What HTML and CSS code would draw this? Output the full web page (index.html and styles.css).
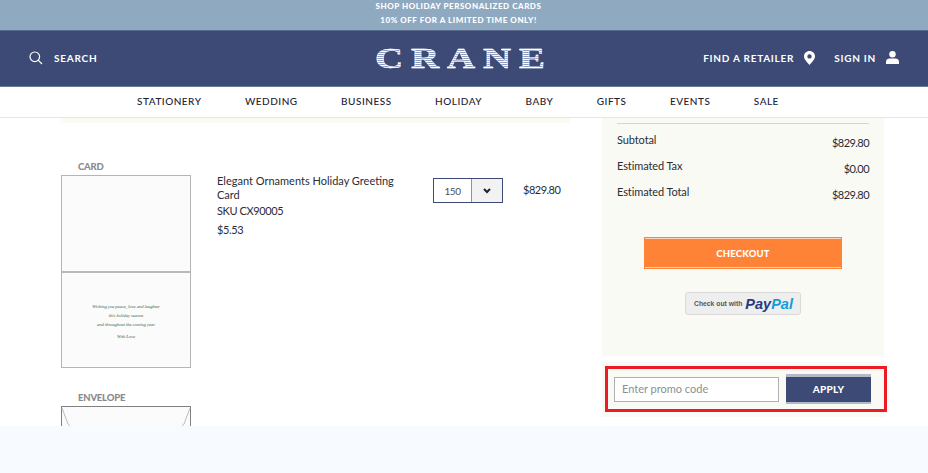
FILE: index.html
```html
<!DOCTYPE html>
<html lang="en">
<head>
  <meta charset="UTF-8" />
  <meta name="viewport" content="width=device-width, initial-scale=1.0" />
  <title>Shopping Cart - Crane</title>
  <link rel="stylesheet" href="styles.css">
</head>
<body>
  <div class="promo-bar">
    <p>SHOP HOLIDAY PERSONALIZED CARDS</p>
    <p>10% OFF FOR A LIMITED TIME ONLY!</p>
  </div>

  <header class="site-header">
    <a class="search-link" href="#">
      <svg class="icon-search" width="14" height="14" viewBox="0 0 14 14" fill="none" stroke="#fff" stroke-width="1.2">
        <circle cx="5.8" cy="5.8" r="4.8" />
        <path d="M9.2 9.2 13 13" />
      </svg>
      <span>SEARCH</span>
    </a>
    <a class="logo" href="#">CRANE</a>
    <div class="account-links">
      <a class="retailer-link" href="#">
        <span>FIND A RETAILER</span>
        <svg width="11" height="14" viewBox="0 0 11 14">
          <path fill="#fff" fill-rule="evenodd" d="M5.5 0C2.4 0 0 2.4 0 5.3 0 8.6 3.4 11.4 5.5 14 7.6 11.4 11 8.6 11 5.3 11 2.4 8.6 0 5.5 0ZM5.5 3.2a2.2 2.2 0 1 1 0 4.4 2.2 2.2 0 0 1 0-4.4Z" />
        </svg>
      </a>
      <a class="signin-link" href="#">
        <span>SIGN IN</span>
        <svg width="13" height="13" viewBox="0 0 13 13">
          <circle fill="#fff" cx="6.5" cy="3.2" r="3.2" />
          <path fill="#fff" d="M0 13V10.6C0 8.6 1.8 7.4 3.6 7.4H9.4C11.2 7.4 13 8.6 13 10.6V13Z" />
        </svg>
      </a>
    </div>
  </header>

  <nav class="main-nav">
    <a href="#">STATIONERY</a>
    <a href="#">WEDDING</a>
    <a href="#">BUSINESS</a>
    <a href="#">HOLIDAY</a>
    <a href="#">BABY</a>
    <a href="#">GIFTS</a>
    <a href="#">EVENTS</a>
    <a href="#">SALE</a>
  </nav>

  <main class="cart">
    <section class="cart-items">
      <div class="cart-strip"></div>
      <div class="cart-item">
        <div class="item-proofs">
          <h4 class="proof-label">CARD</h4>
          <div class="card-proof">
            <div class="card-panel"></div>
            <div class="card-panel card-inside">
              <p>Wishing you peace, love and laughter</p>
              <p>this holiday season</p>
              <p>and throughout the coming year</p>
              <p class="card-sign">With Love</p>
            </div>
          </div>
          <h4 class="proof-label envelope-label">ENVELOPE</h4>
          <div class="envelope-proof">
            <svg width="130" height="22" viewBox="0 0 130 22" fill="none" stroke="#bbb">
              <path d="M1 1 7 17Q8 20 14 21M129 1 123 17Q122 20 116 21" />
            </svg>
          </div>
        </div>
        <div class="item-info">
          <div class="item-name">Elegant Ornaments Holiday Greeting Card</div>
          <div class="item-sku">SKU CX90005</div>
          <div class="item-price">$5.53</div>
        </div>
        <div class="qty-select">
          <span class="qty-value">150</span>
          <span class="qty-arrow">
            <svg width="8" height="6" viewBox="0 0 8 6" fill="none" stroke="#1d2233" stroke-width="2">
              <path d="M1 1 4 4 7 1" />
            </svg>
          </span>
        </div>
        <div class="item-total">$829.80</div>
      </div>
    </section>

    <aside class="cart-side">
      <div class="summary">
        <div class="summary-rows">
          <div class="summary-row"><span>Subtotal</span><span class="amount">$829.80</span></div>
          <div class="summary-row"><span>Estimated Tax</span><span class="amount">$0.00</span></div>
          <div class="summary-row"><span>Estimated Total</span><span class="amount">$829.80</span></div>
        </div>
        <button class="checkout-btn">CHECKOUT</button>
        <button class="paypal-btn">
          <span class="paypal-note">Check out with</span>
          <span class="paypal-name"><b>Pay</b><i>Pal</i></span>
        </button>
      </div>
      <form class="promo-form">
        <input type="text" placeholder="Enter promo code" />
        <button type="button" class="apply-btn">APPLY</button>
        <div class="promo-outline"></div>
      </form>
    </aside>
  </main>

  <footer class="site-footer"></footer>
</body>
</html>
```

FILE: styles.css
```css
* {
  box-sizing: border-box;
}
body {
  font-family: 'Lato', sans-serif;
  background: #fff;
  margin: 0;
  color: #2b2d36;
  height: 473px;
  overflow: hidden;
}
a {
  color: inherit;
  text-decoration: none;
}

/* top bars */
.promo-bar {
  height: 30px;
  background: #8fa9c1;
  color: #fff;
  text-align: center;
  font-size: 8px;
  font-weight: 900;
  letter-spacing: 0.55px;
  padding: 1px 11px 0 0;
}
.promo-bar p {
  margin: 0;
  height: 14px;
  line-height: 11px;
}
.site-header {
  height: 57px;
  background: #3d4a75;
  border-top: 1px solid #5a6d91;
  border-bottom: 1px solid #6d7a99;
  color: #fff;
  display: grid;
  grid-template-columns: 1fr auto 1fr;
  align-items: center;
  padding: 0 29px 2px;
  font-size: 10px;
  font-weight: 700;
  letter-spacing: 0.75px;
}
.search-link {
  display: flex;
  align-items: center;
  gap: 11px;
}
.logo {
  width: 170px;
  font-family: 'Liberation Serif', serif;
  font-size: 30px;
  font-weight: 700;
  line-height: 30px;
  letter-spacing: 6px;
  text-indent: 6px;
  text-align: center;
  white-space: nowrap;
  transform: translateX(-4px) scaleX(1.3);
  background: repeating-linear-gradient(180deg, #fff 0, #fff 1px, #8f9abb 1px, #8f9abb 2px);
  -webkit-background-clip: text;
  background-clip: text;
  color: transparent;
  -webkit-text-stroke: 0.4px #fff;
}
.account-links {
  display: flex;
  justify-content: flex-end;
  align-items: center;
  gap: 19px;
}
.retailer-link,
.signin-link {
  display: flex;
  align-items: center;
  gap: 10px;
}
.main-nav {
  height: 31px;
  background: #fff;
  border-bottom: 1px solid #e6e6df;
  display: flex;
  justify-content: center;
  align-items: center;
  gap: 43.5px;
  padding: 0 12px 3px 0;
  color: #1d2233;
  font-size: 10px;
  font-weight: 500;
  letter-spacing: 0.5px;
}

/* cart body */
.cart {
  height: 308px;
  overflow: hidden;
  display: flex;
  gap: 32px;
  padding-left: 61px;
}
.cart-items {
  width: 509px;
}
.cart-strip {
  height: 5px;
  background: #fbfbf4;
}
.cart-item {
  display: flex;
  align-items: flex-start;
  padding-top: 38px;
}
.item-proofs {
  width: 130px;
  margin-right: 26px;
  flex-shrink: 0;
}
.proof-label {
  margin: 0 0 3px 17px;
  height: 11px;
  line-height: 11px;
  font-size: 9.5px;
  font-weight: 900;
  letter-spacing: -0.2px;
  color: #8a8a8e;
}
.card-proof {
  height: 193px;
  border: 1px solid #b5b5b5;
  background: #fbfbfb;
  display: flex;
  flex-direction: column;
}
.card-panel {
  height: 95px;
}
.card-inside {
  flex: 1;
  border-top: 2px solid #b9b9b9;
  padding-top: 29px;
  text-align: center;
  font-family: 'Liberation Serif', serif;
  font-style: italic;
  font-size: 4.5px;
  line-height: 9px;
  color: #2f5f46;
}
.card-inside p {
  margin: 0;
}
.card-inside .card-sign {
  margin-top: 3px;
}
.envelope-label {
  margin-top: 24px;
}
.envelope-proof {
  height: 40px;
  border: 1px solid #808080;
  border-bottom: none;
  background: #fbfbfb;
}
.envelope-proof svg {
  display: block;
  margin-left: -1px;
}
.item-info {
  width: 190px;
  margin: 13px 26px 0 0;
  flex-shrink: 0;
  font-size: 11px;
  line-height: 14px;
}
.item-sku {
  margin-top: 2px;
  letter-spacing: -0.4px;
}
.item-price {
  margin-top: 5px;
  letter-spacing: -0.4px;
}
.qty-select {
  width: 70px;
  height: 25px;
  border: 1px solid #3d4a75;
  display: flex;
  margin-right: 20px;
  margin-top: 17px;
  flex-shrink: 0;
  font-size: 10px;
}
.qty-value {
  width: 37px;
  text-align: center;
  line-height: 24px;
  letter-spacing: -0.4px;
  color: #4b4e5c;
}
.qty-arrow {
  flex: 1;
  background: #f2f2f2;
  border-left: 1px solid #8b93ad;
  display: flex;
  align-items: center;
  justify-content: center;
}
.item-total {
  font-size: 11px;
  line-height: 14px;
  margin-top: 22px;
  letter-spacing: -0.5px;
}

/* order summary */
.cart-side {
  width: 282px;
}
.summary {
  height: 238px;
  background: #fafaf4;
  padding: 5px 15px 0;
  display: flex;
  flex-direction: column;
  align-items: center;
}
.summary-rows {
  width: 252px;
  border-top: 1px solid #d4d4d4;
  padding-top: 9px;
  height: 114px;
}
.summary-row {
  display: flex;
  justify-content: space-between;
  height: 26px;
  font-size: 11px;
  line-height: 14px;
  letter-spacing: -0.1px;
}
.amount {
  padding-top: 3px;
  letter-spacing: -0.55px;
}
.checkout-btn {
  width: 198px;
  height: 32px;
  background: #ff8336;
  border: 1px solid #ff8336;
  box-shadow: inset 0 1px 0 #ffd3b5, inset 0 -1px 0 #ffd3b5;
  color: #fff;
  font-family: inherit;
  font-size: 9.5px;
  font-weight: 900;
  letter-spacing: 0.2px;
}
.paypal-btn {
  width: 116px;
  height: 23px;
  margin-top: 23px;
  padding: 0 0 0 8px;
  background: #eeeeee;
  border: 1px solid #d9d9d9;
  border-radius: 3px;
  display: flex;
  align-items: center;
  gap: 3px;
  font-family: 'Liberation Sans', sans-serif;
}
.paypal-note {
  font-size: 6.8px;
  font-weight: 700;
  color: #55565c;
  white-space: nowrap;
}
.paypal-name {
  font-size: 14.5px;
  font-weight: 700;
  font-style: italic;
}
.paypal-name b {
  color: #253b80;
}
.paypal-name i {
  color: #179bd7;
}
.promo-form {
  position: relative;
  height: 55px;
  margin-top: 6px;
  background: #fafaf4;
  display: flex;
  align-items: center;
  gap: 7px;
  padding: 0 0 1px 12px;
}
.promo-form input {
  width: 165px;
  height: 25px;
  border: 1px solid #b0b0b0;
  background: #fff;
  padding: 0 7px 2px;
  font-family: inherit;
  font-size: 11px;
  letter-spacing: 0;
}
.promo-form input::placeholder {
  color: #8b8f96;
}
.apply-btn {
  width: 85px;
  height: 30px;
  background: #3d4a75;
  border: none;
  border-top: 3px solid #b4b9c8;
  border-bottom: 2px solid #b4b9c8;
  box-shadow: inset 0 1px 0 #3d4a75;
  padding: 0 0 2px;
  color: #fff;
  font-family: inherit;
  font-size: 10px;
  font-weight: 900;
  letter-spacing: 0.2px;
}

/* highlight drawn around the promo form */
.promo-outline {
  position: absolute;
  left: 3px;
  top: 4px;
  width: 282px;
  height: 46px;
  border: 3px solid #ed1c24;
  pointer-events: none;
}
.site-footer {
  height: 47px;
  background: #f7fbff;
}
```
